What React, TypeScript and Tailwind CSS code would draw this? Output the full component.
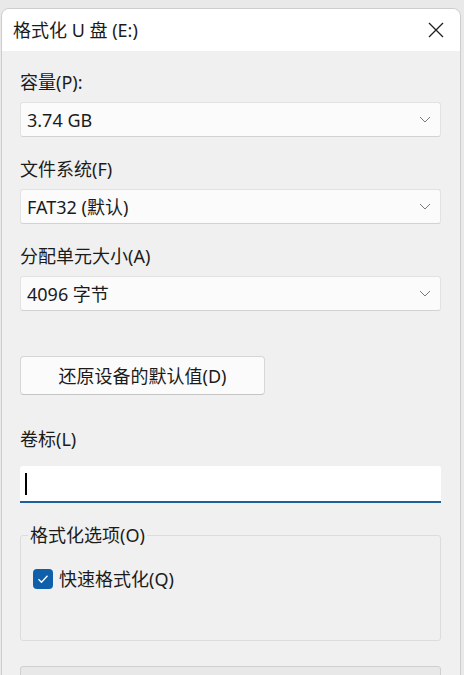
import React from 'react';

const font = { fontFamily: '"Noto Sans", "Noto Sans CJK SC", sans-serif' };

const Chevron = () => (
  <svg width="12" height="7" viewBox="0 0 12 7" fill="none" className="shrink-0">
    <path d="M1 1l5 5 5-5" stroke="#7a7a7a" strokeWidth="1" />
  </svg>
);

const Combo = ({ value }: { value: string }) => (
  <div className="mt-[8px] flex h-[35px] items-center justify-between rounded-[3px] border border-[#e2e2e2] border-b-[#d2d2d2] bg-[#fbfbfb] pl-[6px] pr-[9px]">
    <span className="text-[18px] leading-none text-[#1b1b1b]">{value}</span>
    <Chevron />
  </div>
);

const Label = ({ children, className = '' }: { children: React.ReactNode; className?: string }) => (
  <div className={`h-[24px] text-[18px] leading-[24px] text-[#1b1b1b] ${className}`}>{children}</div>
);

export default function App() {
  return (
    <div className="h-[675px] w-[464px] overflow-hidden bg-[#e9e9e9] pt-[8px]" style={font}>
      <div className="ml-[1px] w-[460px] overflow-hidden rounded-t-[8px] border border-[#cdcdcd]">
        {/* title bar */}
        <div className="flex h-[42px] items-center justify-between bg-white pl-[11px] pr-[16px]">
          <span className="text-[18px] leading-none text-[#1b1b1b]">格式化 U 盘 (E:)</span>
          <svg width="16" height="16" viewBox="0 0 16 16" fill="none">
            <path d="M1 1l14 14M15 1L1 15" stroke="#1f1f1f" strokeWidth="1.3" />
          </svg>
        </div>

        {/* body */}
        <div className="h-[640px] bg-[#f0f0f0] pl-[18px] pr-[19px] pt-[19px]">
          <Label>容量(P):</Label>
          <Combo value="3.74 GB" />

          <Label className="mt-[20px]">文件系统(F)</Label>
          <Combo value="FAT32 (默认)" />

          <Label className="mt-[20px]">分配单元大小(A)</Label>
          <Combo value="4096 字节" />

          <button className="mt-[45px] flex h-[39px] w-[245px] items-center justify-center rounded-[4px] border border-[#d6d6d6] border-b-[#c4c4c4] bg-[#fbfbfb] text-[18px] leading-none text-[#1b1b1b]">
            还原设备的默认值(D)
          </button>

          <Label className="mt-[32px]">卷标(L)</Label>
          <div className="mt-[15px] flex h-[37px] items-center rounded-t-[3px] border-b-2 border-b-[#1f5f9a] bg-white pl-[5px]">
            <div className="h-[22px] w-[1.5px] bg-black" />
          </div>

          <fieldset className="mt-[20px] h-[118px] rounded-[3px] border border-[#dcdcdc]">
            <legend className="ml-[7px] px-[2px] text-[18px] leading-[24px] text-[#1b1b1b]">格式化选项(O)</legend>
            <div className="mt-[20px] flex items-center pl-[12px]">
              <div className="flex h-[20px] w-[20px] items-center justify-center rounded-[4px] bg-[#0f5fab]">
                <svg width="12" height="10" viewBox="0 0 12 10" fill="none">
                  <path d="M1.5 5.2l3 3L10.5 1.8" stroke="white" strokeWidth="1.3" />
                </svg>
              </div>
              <span className="ml-[6px] text-[18px] leading-[24px] text-[#1b1b1b]">快速格式化(Q)</span>
            </div>
          </fieldset>

          <div className="mt-[25px] h-[30px] rounded-[3px] border border-[#cfcfcf] bg-[#e8e8e8]" />
        </div>
      </div>
    </div>
  );
}
